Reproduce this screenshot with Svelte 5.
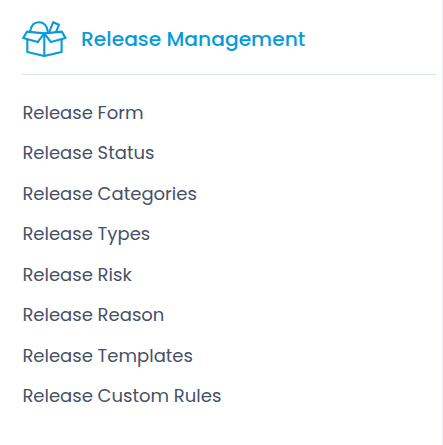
<script>
  const items = [
    'Release Form',
    'Release Status',
    'Release Categories',
    'Release Types',
    'Release Risk',
    'Release Reason',
    'Release Templates',
    'Release Custom Rules',
  ];
</script>

<section class="panel">
  <header class="heading">
    <svg class="icon" width="46" height="38" viewBox="0 0 46 38" aria-hidden="true">
      <path d="M5 11.6 1.2 18.1 15.7 22.1 22.3 13.4ZM22.3 13.4 28.9 22.1 43.6 18.1 39.8 11.6Z" />
      <path d="M5.3 19.5V32L22.3 36 39.6 32V19.5M22.3 13.4V36" />
      <path d="M8.1 11.5C9 5.6 12.2 2.2 16.8 2.2c4.6 0 8 3.3 8.9 9" />
      <path d="M27.4 11.6 31.2 2.2 37 4.7 34.2 11.7" />
    </svg>
    <h2>Release Management</h2>
  </header>
  <ul>
    {#each items as item}
      <li>{item}</li>
    {/each}
  </ul>
</section>

<style>
  .panel {
    box-sizing: border-box;
    width: 443px;
    height: 445px;
    padding: 0 6px 0 22px;
    overflow: hidden;
    background: #fff;
    border-right: 1px solid #ebedf0;
    color: #465066;
    font-family: Poppins, Inter, "Open Sans", sans-serif;
  }
  .heading {
    box-sizing: border-box;
    display: flex;
    align-items: center;
    height: 75px;
    padding-top: 4px;
    border-bottom: 1px solid #dce4ec;
  }
  .icon {
    flex: none;
    fill: none;
    stroke: #079bdc;
    stroke-width: 2.1;
    stroke-linejoin: round;
    stroke-linecap: round;
  }
  h2 {
    margin: 0 0 0 13px;
    color: #079bdc;
    font-size: 20.25px;
    font-weight: 500;
    line-height: 30px;
    white-space: nowrap;
  }
  ul {
    margin: 0;
    padding: 18px 0 0 0.4px;
    list-style: none;
  }
  li {
    height: 40.45px;
    font-size: 18px;
    line-height: 40.45px;
    white-space: nowrap;
  }
</style>
